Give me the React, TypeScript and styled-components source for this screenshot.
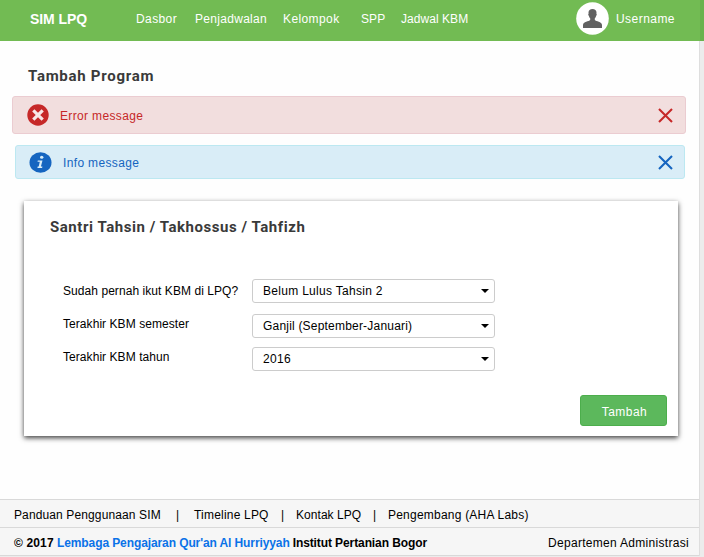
import React from 'react';
import styled, { createGlobalStyle } from 'styled-components';

const GlobalStyle = createGlobalStyle`
  * { box-sizing: border-box; }
  body { margin: 0; background: #ececec; overflow: hidden; }
`;

const Frame = styled.div`
  width: 704px;
  height: 557px;
  display: flex;
  background: #ececec;
  font: 12px/14px "Liberation Sans", Arial, sans-serif;
  color: #000;
  white-space: nowrap;
`;
const Page = styled.div`
  width: 700px;
  height: 557px;
  display: flex;
  flex-direction: column;
  background: #fefefe;
  border-right: 1px solid #dedede;
`;
const Gutter = styled.div`
  width: 4px;
  height: 41px;
  background: #6ab24c;
`;
const Header = styled.header`
  width: 700px;
  height: 41px;
  flex: none;
  display: flex;
  align-items: center;
  padding: 0 25px 4px 30px;
  background: #72bb53;
  color: #fff;
`;
const Brand = styled.div`
  width: 106px;
  font-size: 14px;
  font-weight: bold;
  line-height: 16px;
  letter-spacing: -0.08px;
`;
const Nav = styled.nav`
  display: flex;
  flex: 1;
`;
const NavLink = styled.a<{ $width: number; $track: number }>`
  width: ${(p) => p.$width}px;
  letter-spacing: ${(p) => p.$track}px;
`;
const User = styled.div`
  display: flex;
  align-items: center;
  gap: 7px;
  width: 99px;
  letter-spacing: 0.45px;
`;
const Avatar = styled.svg`
  width: 33px;
  height: 33px;
  flex: none;
`;
const Title = styled.h1`
  margin: 25px 0 0 28px;
  font: bold 15px/20px Roboto, sans-serif;
  letter-spacing: 0.72px;
  color: #3a3a3a;
`;

const tones = {
  error: { fg: '#c62828', bg: '#f2dede', edge: '#ebccd1' },
  info: { fg: '#1565c0', bg: '#d9edf7', edge: '#bce8f1' },
};
const Alert = styled.div<{ $tone: keyof typeof tones }>`
  display: flex;
  align-items: center;
  flex: none;
  height: ${(p) => (p.$tone === 'error' ? 38 : 34)}px;
  margin: ${(p) => (p.$tone === 'error' ? '10px 13px 0 12px' : '11px 14px 0 15px')};
  padding: ${(p) => (p.$tone === 'error' ? '0 12px 0 14px' : '0 11px 0 13px')};
  border: 1px solid ${(p) => tones[p.$tone].edge};
  border-radius: 3px;
  background: ${(p) => tones[p.$tone].bg};
  color: ${(p) => tones[p.$tone].fg};
  svg { flex: none; display: block; }
`;
const AlertText = styled.span<{ $track: number }>`
  flex: 1;
  padding: 2px 0 0 11px;
  letter-spacing: ${(p) => p.$track}px;
`;

const Card = styled.section`
  flex: none;
  width: 654px;
  height: 235px;
  margin: 22px 0 0 24px;
  padding: 16px 11px 10px 26px;
  display: flex;
  flex-direction: column;
  background: #fff;
  box-shadow: 0 2px 5px rgba(0, 0, 0, 0.75);
`;
const CardTitle = styled.h2`
  margin: 0;
  font: bold 15px/20px Roboto, sans-serif;
  letter-spacing: 0.55px;
  color: #3a3a3a;
`;
const Field = styled.div<{ $gap: number }>`
  display: flex;
  height: 24px;
  margin: ${(p) => p.$gap}px 0 0 13px;
`;
const Label = styled.label<{ $top: number }>`
  width: 189px;
  padding-top: ${(p) => p.$top}px;
  letter-spacing: 0.06px;
`;
const Select = styled.div<{ $track: number }>`
  width: 243px;
  height: 24px;
  display: flex;
  align-items: center;
  justify-content: space-between;
  padding: 0 5px 0 10px;
  border: 1px solid #ccc;
  border-radius: 3px;
  letter-spacing: ${(p) => p.$track}px;
`;
const Submit = styled.button`
  width: 87px;
  height: 31px;
  margin: auto 0 0 auto;
  padding: 2px 0 0 2px;
  border: 1px solid #4cae4c;
  border-radius: 3px;
  background: #5cb85c;
  color: #fff;
  font: 12px/14px "Liberation Sans", Arial, sans-serif;
  letter-spacing: 0.45px;
`;

const Footer = styled.footer`
  margin-top: auto;
  height: 58px;
  border-top: 1px solid #d9d9d9;
  background: #f6f6f6;
`;
const FooterRow = styled.div`
  display: flex;
  align-items: center;
  height: 28px;
  padding: 3px 10px 0 14px;
  border-bottom: 1px solid #d9d9d9;
`;
const FooterItem = styled.span<{ $width?: number; $track: number }>`
  width: ${(p) => (p.$width ? `${p.$width}px` : 'auto')};
  letter-spacing: ${(p) => p.$track}px;
`;
const Divider = styled.span<{ $width: number }>`
  width: ${(p) => p.$width}px;
`;
const Copyright = styled.strong`
  flex: 1;
  display: flex;
  gap: 3px;
  letter-spacing: -0.1px;
`;
const Year = styled.span`
  width: 40px;
  letter-spacing: 0.15px;
`;
const OrgLink = styled.a`
  color: #0a72e8;
`;
const BottomEdge = styled.div`
  height: 1px;
  width: 700px;
  background: #ececec;
`;

const Close = ({ color }: { color: string }) => (
  <svg width="15" height="15" viewBox="0 0 15 15">
    <path d="M1 1L14 14M14 1L1 14" stroke={color} strokeWidth="2.1" />
  </svg>
);
const Caret = () => (
  <svg width="8" height="4" viewBox="0 0 8 4">
    <path d="M0 0H8L4 4Z" />
  </svg>
);

const links: [string, number, number][] = [
  ['Dasbor', 59, 0.4],
  ['Penjadwalan', 88, 0.3],
  ['Kelompok', 78, 0.4],
  ['SPP', 40, 0.1],
  ['Jadwal KBM', 70, 0.05],
];
const fields = [
  { label: 'Sudah pernah ikut KBM di LPQ?', value: 'Belum Lulus Tahsin 2', gap: 42, top: 5, track: 0.3 },
  { label: 'Terakhir KBM semester', value: 'Ganjil (September-Januari)', gap: 11, top: 3, track: 0.2 },
  { label: 'Terakhir KBM tahun', value: '2016', gap: 9, top: 3, track: 0.3 },
];

export default function App() {
  return (
    <Frame>
      <GlobalStyle />
      <Page>
        <Header>
          <Brand>SIM LPQ</Brand>
          <Nav>
            {links.map(([text, width, track]) => (
              <NavLink key={text} $width={width} $track={track}>{text}</NavLink>
            ))}
          </Nav>
          <User>
            <Avatar viewBox="0 0 33 33">
              <circle cx="16.5" cy="16.5" r="16.3" fill="#fff" />
              <path
                fill="#616161"
                d="M16.5 7C18.9 7 20.5 8.3 20.5 10.6C20.5 11.2 20.4 11.5 20.4 11.8C21 12 20.8 13.2 20.1 14C19.8 15.2 19.2 15.9 18.8 16.3V18C20 19.4 25.9 19.6 26 23V26H7V23C7.1 19.6 13 19.4 14.2 18V16.3C13.8 15.9 13.2 15.2 12.9 14C12.2 13.2 12 12 12.6 11.8C12.6 11.5 12.5 11.2 12.5 10.6C12.5 8.3 14.1 7 16.5 7Z"
              />
            </Avatar>
            Username
          </User>
        </Header>
        <Title>Tambah Program</Title>
        <Alert $tone="error">
          <svg width="22" height="22" viewBox="0 0 22 22">
            <circle cx="11" cy="11" r="10.7" fill="#c62828" />
            <path d="M6.3 6.3L15.7 15.7M15.7 6.3L6.3 15.7" stroke="#f8e7e7" strokeWidth="3.2" />
          </svg>
          <AlertText $track={0.35}>Error message</AlertText>
          <Close color="#c62828" />
        </Alert>
        <Alert $tone="info">
          <svg width="23" height="21" viewBox="0 0 23 21">
            <ellipse cx="11.5" cy="10.5" rx="11" ry="10.2" fill="#1565c0" />
            <ellipse cx="12.7" cy="5.3" rx="1.7" ry="1.5" fill="#d9edf7" />
            <path d="M8.8 8.4H13.5L11.9 14.6H13.4L13.1 16H8.4L8.7 14.6H9.7L10.8 9.8H8.5Z" fill="#d9edf7" />
          </svg>
          <AlertText $track={0.35}>Info message</AlertText>
          <Close color="#1565c0" />
        </Alert>
        <Card>
          <CardTitle>Santri Tahsin / Takhossus / Tahfizh</CardTitle>
          {fields.map((f) => (
            <Field key={f.label} $gap={f.gap}>
              <Label $top={f.top}>{f.label}</Label>
              <Select $track={f.track}>{f.value}<Caret /></Select>
            </Field>
          ))}
          <Submit>Tambah</Submit>
        </Card>
        <Footer>
          <FooterRow>
            <FooterItem $width={162} $track={0.12}>Panduan Penggunaan SIM</FooterItem>
            <Divider $width={18}>|</Divider>
            <FooterItem $width={87} $track={0.2}>Timeline LPQ</FooterItem>
            <Divider $width={15}>|</Divider>
            <FooterItem $width={77} $track={0.05}>Kontak LPQ</FooterItem>
            <Divider $width={15}>|</Divider>
            <FooterItem $track={0.22}>Pengembang (AHA Labs)</FooterItem>
          </FooterRow>
          <FooterRow>
            <Copyright>
              <Year>© 2017</Year>
              <OrgLink>Lembaga Pengajaran Qur'an Al Hurriyyah</OrgLink>
              <span>Institut Pertanian Bogor</span>
            </Copyright>
            <FooterItem $track={0.3}>Departemen Administrasi</FooterItem>
          </FooterRow>
          <BottomEdge />
        </Footer>
      </Page>
      <Gutter />
    </Frame>
  );
}
